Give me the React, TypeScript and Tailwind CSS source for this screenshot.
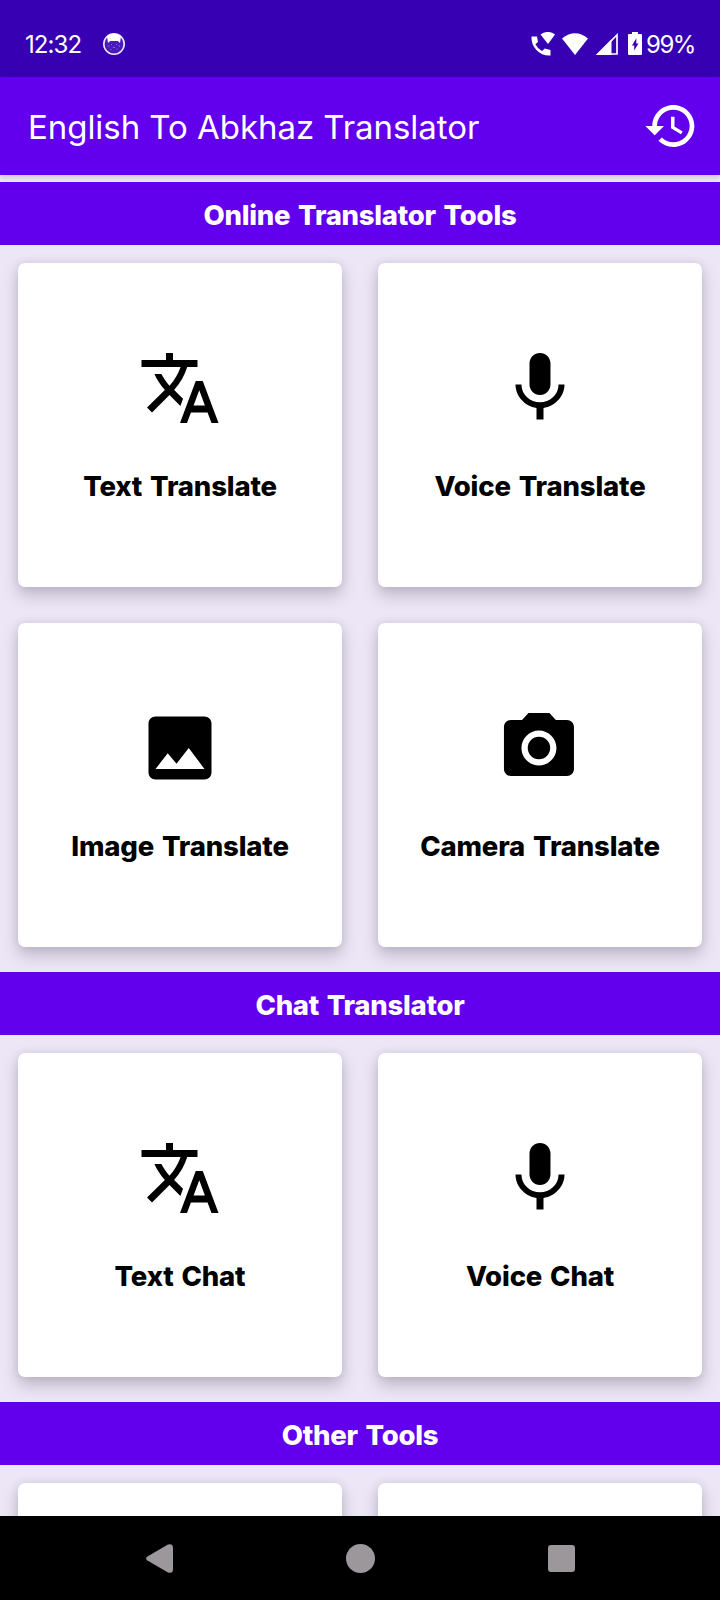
import type { ReactNode } from 'react';

const paths = {
  translate:
    'M12.87 15.07l-2.54-2.51.03-.03c1.74-1.94 2.98-4.17 3.71-6.53H17V4h-7V2H8v2H1v1.99h11.17C11.5 7.92 10.44 9.75 9 11.35 8.07 10.32 7.3 9.19 6.69 8h-2c.73 1.63 1.73 3.17 2.98 4.56l-5.09 5.02L4 19l5-5 3.11 3.11.76-2.04zM18.5 10h-2L12 22h2l1.12-3h4.75L21 22h2l-4.5-12zm-2.62 7l1.62-4.33L19.12 17h-3.24z',
  mic: 'M12 14c1.66 0 2.99-1.34 2.99-3L15 5c0-1.66-1.34-3-3-3S9 3.34 9 5v6c0 1.66 1.34 3 3 3zm5.3-3c0 3-2.54 5.1-5.3 5.1S6.7 14 6.7 11H5c0 3.41 2.72 6.23 6 6.72V21h2v-3.28c3.28-.48 6-3.3 6-6.72h-1.7z',
  image:
    'M21 19V5c0-1.1-.9-2-2-2H5c-1.1 0-2 .9-2 2v14c0 1.1.9 2 2 2h14c1.1 0 2-.9 2-2zM8.5 13.5l2.5 3.01L14.5 12l4.5 6H5l3.5-4.5z',
  camera:
    'M11.7 8.8a3.2 3.2 0 1 0 0 6.4 3.2 3.2 0 1 0 0-6.4zM8.7 2L6.87 4H3.7c-1.1 0-2 .9-2 2v12c0 1.1.9 2 2 2h16c1.1 0 2-.9 2-2V6c0-1.1-.9-2-2-2h-3.17L14.7 2h-6zm3 15c-2.76 0-5-2.24-5-5s2.24-5 5-5 5 2.24 5 5-2.24 5-5 5z',
  history:
    'M13 3c-4.97 0-9 4.03-9 9H1l3.89 3.89.07.14L9 12H6c0-3.87 3.13-7 7-7s7 3.13 7 7-3.13 7-7 7c-1.93 0-3.68-.79-4.94-2.06l-1.42 1.42C8.27 19.99 10.51 21 13 21c4.97 0 9-4.03 9-9s-4.03-9-9-9zm-1 5v5l4.28 2.54.72-1.21-3.5-2.08V8H12z',
};

function Icon({ name, className }: { name: keyof typeof paths; className: string }) {
  return (
    <svg viewBox="0 0 24 24" fill="currentColor" className={className}>
      <path d={paths[name]} />
    </svg>
  );
}

function StatusBar() {
  return (
    <div className="flex h-[77px] shrink-0 items-center bg-[#3700b3] pt-[10px] pr-[25px] pl-[25px] text-[24px] text-white">
      <span className="w-[57px] pt-0.5 whitespace-nowrap tracking-[-0.9px]">12:32</span>
      <svg viewBox="0 0 24 24" className="ml-5 size-6">
        <circle cx="12" cy="12" r="10.2" fill="#4a1bbb" stroke="#efe6ff" strokeWidth="1.6" />
        <path d="M5 4.2Q12-.5 19 4.2L18 11 15.8 9H8.2L6 11z" fill="#fff" />
        <path d="M6 14h1.4M9 12.5h1M14 12.5h1M16.5 14H18M11 15.5h2M8.5 17.5h1M14.5 17h1" stroke="#8f6ae0" strokeWidth="1" />
      </svg>
      <div className="ml-auto flex items-center">
        <svg viewBox="0 0 25 24" fill="#fff" className="h-6 w-[25px]">
          <path d="M.5 4.5H6L7 10 4.4 12.2Q6.7 16.8 11 19L13.8 16.5 19.5 18V23.5Q11 24 5.4 18 0 12.3.5 4.5z" />
          <path d="M9.5 2.6Q17-2.8 24 2.6L17 12z" />
        </svg>
        <svg viewBox="0 0 26 22" fill="#fff" className="ml-1.5 h-[22px] w-[26px]">
          <path d="M0 5.4Q13-5 26 5.4L13 22z" />
        </svg>
        <svg viewBox="0 0 22 22" className="ml-2 size-[22px]">
          <path d="M21 2V21H2z" fill="none" stroke="#fff" strokeWidth="1.7" />
          <path d="M15.5 6.5V22H0z" fill="#fff" />
        </svg>
        <svg viewBox="0 0 14 23" className="ml-2.5 h-[23px] w-[14px]">
          <path d="M4 0h6v2h3q1 0 1 1v19q0 1-1 1H1q-1 0-1-1V3q0-1 1-1h3z" fill="#fff" />
          <path d="M8.3 6.2L4 13.4H6.2v5.2l4.2-7H8.3z" fill="#3700b3" />
        </svg>
        <span className="ml-1 w-[49px] pt-0.5 whitespace-nowrap tracking-[-1.5px]">99%</span>
      </div>
    </div>
  );
}

function SectionHeader({ children }: { children: ReactNode }) {
  return (
    <h2 className="mt-[7px] flex h-[63px] shrink-0 items-center justify-center bg-[#6200ee] pt-1 text-[27.5px] font-extrabold tracking-[-0.25px] text-white [word-spacing:2px]">
      {children}
    </h2>
  );
}

function Card({ icon, label }: { icon: keyof typeof paths; label: string }) {
  return (
    <div className="flex h-[324px] flex-col items-center rounded-[7px] bg-white pt-[83px] text-black shadow-[0_8px_16px_rgba(70,60,80,0.28),0_0_8px_rgba(70,60,80,0.1)]">
      <Icon name={icon} className="size-[84px]" />
      <span className="mt-9 text-[27.5px] leading-[40px] font-extrabold tracking-[-0.15px] whitespace-nowrap [word-spacing:2px]">
        {label}
      </span>
    </div>
  );
}

function CardGrid({ children }: { children?: ReactNode }) {
  return <div className="grid shrink-0 grid-cols-2 gap-9 p-[18px]">{children}</div>;
}

export default function App() {
  return (
    <div className="flex h-[1600px] w-[720px] flex-col overflow-hidden bg-[#ece6f6] font-['Inter','Noto_Sans',sans-serif]">
      <StatusBar />
      <header className="z-10 flex h-[98px] shrink-0 items-center justify-between bg-[#6200ee] pr-[21px] pl-7 text-white shadow-[0_2px_5px_rgba(60,50,70,0.2)]">
        <h1 className="pt-[3px] text-[33px] tracking-[-0.05px] whitespace-nowrap">English To Abkhaz Translator</h1>
        <Icon name="history" className="size-14" />
      </header>
      <main className="flex min-h-0 flex-1 flex-col overflow-hidden">
        <SectionHeader>Online Translator Tools</SectionHeader>
        <CardGrid>
          <Card icon="translate" label="Text Translate" />
          <Card icon="mic" label="Voice Translate" />
          <Card icon="image" label="Image Translate" />
          <Card icon="camera" label="Camera Translate" />
        </CardGrid>
        <SectionHeader>Chat Translator</SectionHeader>
        <CardGrid>
          <Card icon="translate" label="Text Chat" />
          <Card icon="mic" label="Voice Chat" />
        </CardGrid>
        <SectionHeader>Other Tools</SectionHeader>
        <CardGrid>
          <div className="h-[324px] rounded-[7px] bg-white shadow-[0_8px_16px_rgba(70,60,80,0.28),0_0_8px_rgba(70,60,80,0.1)]" />
          <div className="h-[324px] rounded-[7px] bg-white shadow-[0_8px_16px_rgba(70,60,80,0.28),0_0_8px_rgba(70,60,80,0.1)]" />
        </CardGrid>
      </main>
      <nav className="z-10 flex h-[84px] shrink-0 items-center bg-black pl-[146px] text-[#9b979b]">
        <svg viewBox="0 0 27 29" fill="currentColor" className="h-[29px] w-[27px]">
          <path d="M1.4 12.6L22 .5Q27-1 27 4V25Q27 30 22 28.5L1.4 16.4Q-1.2 14.5 1.4 12.6z" />
        </svg>
        <div className="ml-[173px] size-[29px] rounded-full bg-[#9b979b]" />
        <div className="ml-[173px] size-[27px] rounded-[3px] bg-[#9b979b]" />
      </nav>
    </div>
  );
}
